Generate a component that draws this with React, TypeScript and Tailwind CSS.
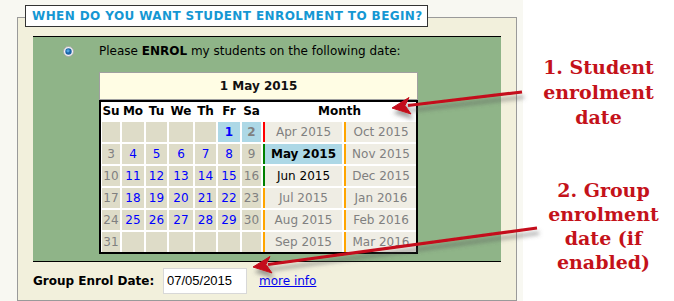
const days: (number | null)[] = [
  null, null, null, null, null, 1, 2,
  3, 4, 5, 6, 7, 8, 9,
  10, 11, 12, 13, 14, 15, 16,
  17, 18, 19, 20, 21, 22, 23,
  24, 25, 26, 27, 28, 29, 30,
  31, null, null, null, null, null, null,
];

const months = [
  { a: "Apr 2015", bar: "border-[#ff0000]", b: "Oct 2015" },
  { a: "May 2015", bar: "border-[#008000]", b: "Nov 2015" },
  { a: "Jun 2015", bar: "border-[#008000]", b: "Dec 2015" },
  { a: "Jul 2015", bar: "border-[#ffa500]", b: "Jan 2016" },
  { a: "Aug 2015", bar: "border-[#ffa500]", b: "Feb 2016" },
  { a: "Sep 2015", bar: "border-[#ffa500]", b: "Mar 2016" },
];

function Radio() {
  return (
    <svg width="11" height="11" viewBox="0 0 11 11">
      <circle cx="5.5" cy="5.5" r="5" fill="#f4f4f4" stroke="#a9a9a9" />
      <circle cx="5.5" cy="5.5" r="3.2" fill="#1c64a8" />
      <circle cx="5" cy="4.8" r="1.6" fill="#4fa3e0" />
    </svg>
  );
}

function Calendar() {
  const rows = [0, 1, 2, 3, 4, 5];
  return (
    <div className="w-[319px] ml-[66px]">
      <div className="h-[28px] border border-[#a0a0a0] bg-[#fffde4] flex items-center justify-center font-bold text-[12px] text-[#111]">
        1 May 2015
      </div>
      <div className="border-2 border-black bg-white pl-[1px] pt-0">
        <div className="grid grid-cols-[18px_22px_21px_24px_21px_22px_19px_79px_72px] grid-rows-[18px_repeat(6,20px)] gap-[2px] text-[12px]">
          {["Su", "Mo", "Tu", "We", "Th", "Fr", "Sa"].map((d) => (
            <div key={d} className="flex items-center justify-center font-bold text-black">
              {d}
            </div>
          ))}
          <div className="col-span-2 flex items-center justify-center font-bold text-black">
            Month
          </div>
          {rows.map((r) => (
            <>
              {days.slice(r * 7, r * 7 + 7).map((d, i) => {
                const weekend = i === 0 || i === 6;
                const sel = d === 1 || d === 2;
                return (
                  <div
                    key={`d${r}-${i}`}
                    className={`flex items-center justify-center ${
                      sel ? "bg-[#add8e6] font-bold" : "bg-[#dedcc8]"
                    } ${weekend ? "text-[#808080]" : "text-[#0000ff]"}`}
                  >
                    {d ?? ""}
                  </div>
                );
              })}
              <div
                key={`ma${r}`}
                className={`flex items-center justify-center border-l-2 ${months[r].bar} ${
                  r === 1
                    ? "bg-[#add8e6] font-bold text-black"
                    : r === 2
                    ? "bg-[#efede4] text-black"
                    : "bg-[#efede4] text-[#808080]"
                }`}
              >
                {months[r].a}
              </div>
              <div
                key={`mb${r}`}
                className="flex items-center justify-center border-l-2 border-[#ffa500] bg-[#efede4] text-[#808080]"
              >
                {months[r].b}
              </div>
            </>
          ))}
        </div>
      </div>
    </div>
  );
}

export default function App() {
  return (
    <div className="relative w-[674px] h-[301px] overflow-hidden bg-white flex font-['DejaVu_Sans',sans-serif]">
      <div className="w-[523px] h-full bg-[#f8f8f2] pl-[17px]">
        <div className="mt-[17px] w-[500px] h-[284px] border border-[#9a9a9a] bg-[#f2f0dc]">
          <div className="-mt-[13px] ml-[7px] w-[403px] h-[22px] border border-[#333] bg-white flex items-center px-[6px] text-[12px] font-bold text-[#1597d3] tracking-[0.4px] whitespace-nowrap">
            WHEN DO YOU WANT STUDENT ENROLMENT TO BEGIN?
          </div>
          <div className="mt-[9px] ml-[15px] w-[468px] border-y border-black bg-[#8fb488] pb-[7px]">
            <div className="h-[28px] flex items-center pl-[30px] text-[12px] text-black">
              <Radio />
              <span className="ml-[25px]">
                Please <b>ENROL</b> my students on the following date:
              </span>
            </div>
            <div className="mt-[7px]">
              <Calendar />
            </div>
          </div>
          <div className="h-[38px] flex items-center pl-[15px] text-[12px]">
            <span className="font-bold text-black w-[130px] whitespace-nowrap">Group Enrol Date:</span>
            <div className="w-[84px] h-[26px] border border-[#d8d8d8] bg-white flex items-center pl-[3px] text-[13px] text-black font-['Liberation_Sans',sans-serif]">
              07/05/2015
            </div>
            <a className="ml-[12px] text-[#0000ee] underline" href="#">
              more info
            </a>
          </div>
        </div>
      </div>

      <div className="w-[151px] flex flex-col font-['DejaVu_Serif',serif] font-bold text-[19px] text-[#c4121a] text-center">
        <div className="mt-[55px] leading-[25px]">
          <div>1. Student</div>
          <div>enrolment</div>
          <div>date</div>
        </div>
        <div className="mt-[48px] pl-[10px] leading-[24px]">
          <div>2. Group</div>
          <div>enrolment</div>
          <div>date (if</div>
          <div>enabled)</div>
        </div>
      </div>

      <svg className="absolute inset-0 pointer-events-none" width="674" height="301">
        <defs>
          <filter id="sh" x="-20%" y="-50%" width="140%" height="200%">
            <feDropShadow dx="2" dy="5" stdDeviation="2.2" floodColor="#555" floodOpacity="0.55" />
          </filter>
        </defs>
        <g filter="url(#sh)" fill="#c4101c" stroke="#c4101c">
          <line x1="522" y1="92" x2="408" y2="105.5" strokeWidth="3.2" />
          <polygon points="392,108 409,97.5 405,105.5 411,114" strokeWidth="1" strokeLinejoin="round" />
          <line x1="537" y1="228" x2="268" y2="264.5" strokeWidth="3.2" />
          <polygon points="253,267 270,256.5 266,264.5 272,273" strokeWidth="1" strokeLinejoin="round" />
        </g>
      </svg>
    </div>
  );
}
